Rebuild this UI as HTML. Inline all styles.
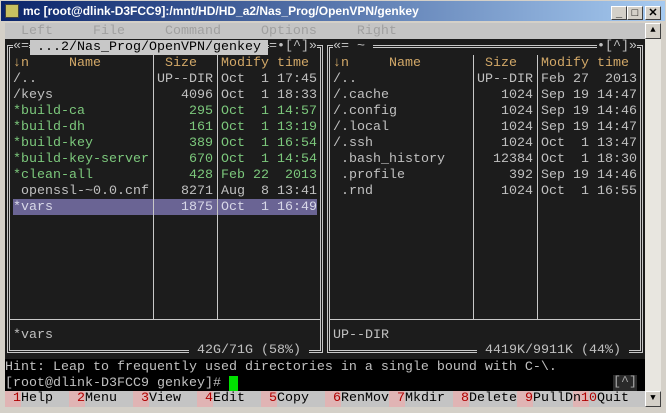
<!DOCTYPE html>
<html><head><meta charset="utf-8"><style>
*{margin:0;padding:0;box-sizing:border-box}
body{width:666px;height:413px;background:#d4d0c8;position:relative;overflow:hidden;font-family:"Liberation Mono",monospace}
.title{position:absolute;left:0;top:0;width:666px;height:22px;background:linear-gradient(90deg,#0a246a,#a6caf0);border:1px solid #d4d0c8;}
.title span{position:absolute;left:22px;top:3px;color:#fff;font:bold 12px "Liberation Sans",sans-serif;white-space:nowrap}
.btn{position:absolute;top:5px;width:16px;height:14px;background:#d4d0c8;border:1px solid;border-color:#fff #404040 #404040 #fff;font:bold 11px "Liberation Sans",sans-serif;text-align:center;line-height:12px;color:#000}
.term{position:absolute;left:5px;top:23px;width:640px;height:384px;background:#1c1c1c}
.t{position:absolute;font-size:13.333px;line-height:16px;height:16px;white-space:pre;color:#c0c0c0;margin-top:1px}
.box{position:absolute;border:3px double #c8c8c8}
.vl{position:absolute;width:1px;background:#c8c8c8}
.hl{position:absolute;height:1px;background:#c8c8c8}
.h{color:#d2a868}.g{color:#7cc87c}.k{color:#000}
.sb{position:absolute;left:645px;top:23px;width:16px;height:384px;background:#e8e6e0}
.sbb{position:absolute;left:645px;width:16px;height:16px;background:#d4d0c8;border:1px solid;border-color:#fff #404040 #404040 #fff}
</style></head><body>
<div class="title"><span>mc [root@dlink-D3FCC9]:/mnt/HD/HD_a2/Nas_Prog/OpenVPN/genkey</span>
<div style="position:absolute;left:4px;top:3px;width:14px;height:14px;background:#c8c060;border:1px solid #404040"></div>
<div class="btn" style="left:610px">_</div><div class="btn" style="left:626px">□</div><div class="btn" style="left:644px">✕</div></div>
<div class="sb"></div>
<div class="sbb" style="top:23px;font-size:9px;text-align:center;line-height:13px">▲</div>
<div class="sbb" style="top:391px;font-size:9px;text-align:center;line-height:13px">▼</div>
<div class="term"></div>
<div style="position:absolute;left:5px;top:23px;width:640px;height:16px;background:#c4c4c4"></div>
<div class="t" style="left:5px;top:23px;color:#a0a0a0">  Left     File     Command     Options     Right</div>
<div class="box" style="left:7px;top:45px;width:316px;height:308px"></div>
<div class="box" style="left:327px;top:45px;width:316px;height:308px"></div>
<div style="position:absolute;left:13px;top:199px;width:304px;height:16px;background:#6a6494"></div>
<div class="vl" style="left:153px;top:55px;height:264px"></div>
<div class="vl" style="left:217px;top:55px;height:264px"></div>
<div class="vl" style="left:473px;top:55px;height:264px"></div>
<div class="vl" style="left:537px;top:55px;height:264px"></div>
<div class="hl" style="left:10px;top:319px;width:310px"></div>
<div class="hl" style="left:330px;top:319px;width:310px"></div>
<div class="t" style="left:13px;top:38px;background:#1c1c1c">«=</div>
<div style="position:absolute;left:30px;top:40px;width:238px;height:15px;background:#c8c8c8"></div>
<div class="t k" style="left:37px;top:39px">...2/Nas_Prog/OpenVPN/genkey</div>
<div class="t" style="left:269px;top:38px;background:#1c1c1c">=•[^]»</div>
<div class="t" style="left:333px;top:38px;background:#1c1c1c">«= ~ </div>
<div class="t" style="left:597px;top:38px;background:#1c1c1c">•[^]»</div>
<div class="t h" style="left:13px;top:55px">↓n     Name</div>
<div class="t h" style="left:165px;top:55px">Size</div>
<div class="t h" style="left:221px;top:55px">Modify time</div>
<div class="t h" style="left:333px;top:55px">↓n     Name</div>
<div class="t h" style="left:485px;top:55px">Size</div>
<div class="t h" style="left:541px;top:55px">Modify time</div>
<div class="t" style="left:13px;top:71px">/..</div><div class="t" style="left:157px;top:71px">UP--DIR</div><div class="t" style="left:221px;top:71px">Oct  1 17:45</div>
<div class="t" style="left:13px;top:87px">/keys</div><div class="t" style="left:181px;top:87px">4096</div><div class="t" style="left:221px;top:87px">Oct  1 18:33</div>
<div class="t g" style="left:13px;top:103px">*build-ca</div><div class="t g" style="left:189px;top:103px">295</div><div class="t g" style="left:221px;top:103px">Oct  1 14:57</div>
<div class="t g" style="left:13px;top:119px">*build-dh</div><div class="t g" style="left:189px;top:119px">161</div><div class="t g" style="left:221px;top:119px">Oct  1 13:19</div>
<div class="t g" style="left:13px;top:135px">*build-key</div><div class="t g" style="left:189px;top:135px">389</div><div class="t g" style="left:221px;top:135px">Oct  1 16:54</div>
<div class="t g" style="left:13px;top:151px">*build-key-server</div><div class="t g" style="left:189px;top:151px">670</div><div class="t g" style="left:221px;top:151px">Oct  1 14:54</div>
<div class="t g" style="left:13px;top:167px">*clean-all</div><div class="t g" style="left:189px;top:167px">428</div><div class="t g" style="left:221px;top:167px">Feb 22  2013</div>
<div class="t" style="left:13px;top:183px"> openssl-~0.0.cnf</div><div class="t" style="left:181px;top:183px">8271</div><div class="t" style="left:221px;top:183px">Aug  8 13:41</div>
<div class="t" style="left:13px;top:199px;color:#d8d8e8">*vars</div><div class="t" style="left:181px;top:199px;color:#d8d8e8">1875</div><div class="t" style="left:221px;top:199px;color:#d8d8e8">Oct  1 16:49</div>
<div class="t" style="left:333px;top:71px">/..</div><div class="t" style="left:477px;top:71px">UP--DIR</div><div class="t" style="left:541px;top:71px">Feb 27  2013</div>
<div class="t" style="left:333px;top:87px">/.cache</div><div class="t" style="left:501px;top:87px">1024</div><div class="t" style="left:541px;top:87px">Sep 19 14:47</div>
<div class="t" style="left:333px;top:103px">/.config</div><div class="t" style="left:501px;top:103px">1024</div><div class="t" style="left:541px;top:103px">Sep 19 14:46</div>
<div class="t" style="left:333px;top:119px">/.local</div><div class="t" style="left:501px;top:119px">1024</div><div class="t" style="left:541px;top:119px">Sep 19 14:47</div>
<div class="t" style="left:333px;top:135px">/.ssh</div><div class="t" style="left:501px;top:135px">1024</div><div class="t" style="left:541px;top:135px">Oct  1 13:47</div>
<div class="t" style="left:333px;top:151px"> .bash_history</div><div class="t" style="left:493px;top:151px">12384</div><div class="t" style="left:541px;top:151px">Oct  1 18:30</div>
<div class="t" style="left:333px;top:167px"> .profile</div><div class="t" style="left:509px;top:167px">392</div><div class="t" style="left:541px;top:167px">Sep 19 14:46</div>
<div class="t" style="left:333px;top:183px"> .rnd</div><div class="t" style="left:501px;top:183px">1024</div><div class="t" style="left:541px;top:183px">Oct  1 16:55</div>
<div class="t" style="left:13px;top:327px">*vars</div>
<div class="t" style="left:333px;top:327px">UP--DIR</div>
<div class="t" style="left:189px;top:342px;background:#1c1c1c"> 42G/71G (58%) </div>
<div class="t" style="left:477px;top:342px;background:#1c1c1c"> 4419K/9911K (44%) </div>
<div style="position:absolute;left:5px;top:359px;width:640px;height:32px;background:#000"></div>
<div class="t" style="left:5px;top:359px">Hint: Leap to frequently used directories in a single bound with C-\.</div>
<div class="t" style="left:5px;top:375px">[root@dlink-D3FCC9 genkey]# </div>
<div style="position:absolute;left:229px;top:376px;width:9px;height:15px;background:#00e000"></div>
<div class="t" style="left:613px;top:374px;background:#2a2a2a;color:#a8a8a8">[^]</div>
<div style="position:absolute;left:5px;top:391px;width:640px;height:16px;background:#c4c4c4"></div>
<div style="position:absolute;left:5px;top:391px;width:16px;height:16px;background:#e0b4b4"></div>
<div style="position:absolute;left:69px;top:391px;width:16px;height:16px;background:#e0b4b4"></div>
<div style="position:absolute;left:133px;top:391px;width:16px;height:16px;background:#e0b4b4"></div>
<div style="position:absolute;left:197px;top:391px;width:16px;height:16px;background:#e0b4b4"></div>
<div style="position:absolute;left:261px;top:391px;width:16px;height:16px;background:#e0b4b4"></div>
<div style="position:absolute;left:325px;top:391px;width:16px;height:16px;background:#e0b4b4"></div>
<div style="position:absolute;left:389px;top:391px;width:16px;height:16px;background:#e0b4b4"></div>
<div style="position:absolute;left:453px;top:391px;width:16px;height:16px;background:#e0b4b4"></div>
<div style="position:absolute;left:517px;top:391px;width:16px;height:16px;background:#e0b4b4"></div>
<div style="position:absolute;left:573px;top:391px;width:16px;height:16px;background:#e0b4b4"></div>
<div class="t k" style="left:5px;top:390px"><span style="color:#b00000"> 1</span>Help  <span style="color:#b00000"> 2</span>Menu  <span style="color:#b00000"> 3</span>View  <span style="color:#b00000"> 4</span>Edit  <span style="color:#b00000"> 5</span>Copy  <span style="color:#b00000"> 6</span>RenMov<span style="color:#b00000"> 7</span>Mkdir <span style="color:#b00000"> 8</span>Delete<span style="color:#b00000"> 9</span>PullDn<span style="color:#b00000">10</span>Quit</div>
</body></html>
